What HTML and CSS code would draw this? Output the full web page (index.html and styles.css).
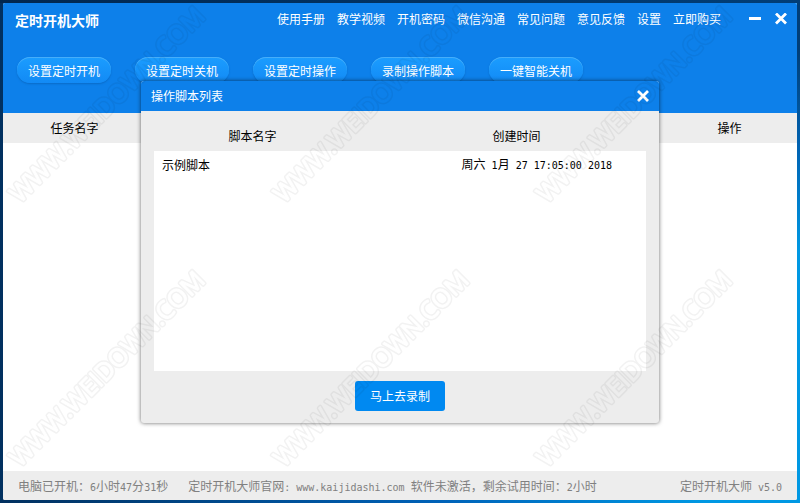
FILE: index.html
```html
<!DOCTYPE html>
<html lang="zh-CN">
<head>
    <meta charset="UTF-8">
    <meta name="viewport" content="width=device-width, initial-scale=1.0">
    <title>定时开机大师</title>
    <link rel="stylesheet" href="styles.css">
</head>
<body>
    <div class="window">
        <header class="header">
            <div class="topbar">
                <h1>定时开机大师</h1>
                <nav class="menu">
                    <a href="#">使用手册</a>
                    <a href="#">教学视频</a>
                    <a href="#">开机密码</a>
                    <a href="#">微信沟通</a>
                    <a href="#">常见问题</a>
                    <a href="#">意见反馈</a>
                    <a href="#">设置</a>
                    <a href="#">立即购买</a>
                </nav>
                <div class="controls">
                    <button type="button" class="icon-btn" aria-label="最小化">
                        <svg width="12" height="12" viewBox="0 0 12 12"><path d="M0 5.5H12" stroke="#fff" stroke-width="3"/></svg>
                    </button>
                    <button type="button" class="icon-btn" aria-label="关闭">
                        <svg width="12" height="12" viewBox="0 0 12 12"><path d="M1 .5L11 10.5M11 .5L1 10.5" stroke="#fff" stroke-width="2.8"/></svg>
                    </button>
                </div>
            </div>
            <div class="toolbar">
                <button type="button">设置定时开机</button>
                <button type="button">设置定时关机</button>
                <button type="button">设置定时操作</button>
                <button type="button">录制操作脚本</button>
                <button type="button">一键智能关机</button>
            </div>
        </header>
        <main class="tasks">
            <table class="task-table">
                <thead>
                    <tr><th class="name">任务名字</th><td></td><th class="action">操作</th></tr>
                </thead>
            </table>
        </main>
        <footer class="status">
            <span>电脑已开机：<span class="en">6</span>小时<span class="en">47</span>分<span class="en">31</span>秒</span>
            <span>定时开机大师官网<span class="en">: www.kaijidashi.com </span>软件未激活，剩余试用时间：<span class="en">2</span>小时</span>
            <span class="version">定时开机大师<span class="en"> v5.0</span></span>
        </footer>

        <section class="dialog" role="dialog" aria-labelledby="dialog-title">
            <div class="dialog-title">
                <h2 id="dialog-title">操作脚本列表</h2>
                <button type="button" class="icon-btn" aria-label="关闭">
                    <svg width="12" height="12" viewBox="0 0 12 12"><path d="M1 1L11 11M11 1L1 11" stroke="#fff" stroke-width="2.8"/></svg>
                </button>
            </div>
            <div class="script-list">
                <table>
                    <thead>
                        <tr><th class="script-name">脚本名字</th><th class="script-time">创建时间</th></tr>
                    </thead>
                    <tbody>
                        <tr><td>示例脚本</td><td class="time">周六<span class="en"> 1</span>月<span class="en"> 27 17:05:00 2018</span></td></tr>
                    </tbody>
                </table>
            </div>
            <div class="dialog-foot">
                <button type="button" class="record">马上去录制</button>
            </div>
        </section>
    </div>

    <svg class="watermark" aria-hidden="true">
        <defs>
            <mask id="outline" maskUnits="userSpaceOnUse" x="-10" y="-40" width="320" height="60">
                <rect x="-10" y="-40" width="320" height="60" fill="#fff"/>
                <text class="mark mark-hole">WWW.WEIDOWN.COM</text>
            </mask>
            <g id="mark"><g mask="url(#outline)"><text class="mark">WWW.WEIDOWN.COM</text></g></g>
        </defs>
        <use href="#mark" transform="translate(20 204) rotate(-45)"/>
        <use href="#mark" transform="translate(284 204) rotate(-45)"/>
        <use href="#mark" transform="translate(547 204) rotate(-45)"/>
        <use href="#mark" transform="translate(20 468) rotate(-45)"/>
        <use href="#mark" transform="translate(284 468) rotate(-45)"/>
        <use href="#mark" transform="translate(547 468) rotate(-45)"/>
    </svg>
</body>
</html>
```
FILE: styles.css
```css
*{
    box-sizing: border-box;
}
body{
    margin: 0;
    padding: 3px;
    min-height: 100vh;
    display: flex;
    background:
        linear-gradient(90deg, #01274f, #013e77) top / 100% 3px no-repeat,
        linear-gradient(#013e77 10%, #0064b4 30%, #0098e3 50%) right / 3px 100% no-repeat,
        linear-gradient(90deg, #01305f, #0062b8 55%, #0098e3 88%);
    font: 12px/16px "Noto Sans CJK SC", sans-serif;
    color: #000;
}
h1,h2{
    margin: 0;
}
button{
    font: inherit;
    color: #fff;
    border: 0;
    padding: 0;
    cursor: pointer;
}
table{
    width: 100%;
    border-collapse: collapse;
    table-layout: fixed;
}
th,td{
    padding: 0;
    font-weight: normal;
}
/* 数字和英文用半角宽度 */
.en{
    font-family: "DejaVu Sans Mono", monospace;
    font-size: 10px;
    white-space: pre;
}
.window{
    position: relative;
    flex: 1;
    display: flex;
    flex-direction: column;
    background: #fff;
    border-radius: 2px;
    overflow: hidden;
}
.header{
    height: 110px;
    background: #0d80ea;
    color: #fff;
}
.topbar{
    display: flex;
    align-items: center;
    height: 32px;
    padding: 0 10px 0 12px;
}
.topbar h1{
    font-size: 14px;
    line-height: 32px;
    padding-top: 2px;
}
.menu{
    display: flex;
    gap: 12px;
    margin-left: auto;
}
.menu a{
    color: #fff;
    text-decoration: none;
}
.controls{
    display: flex;
    gap: 14px;
    margin-left: 28px;
}
.icon-btn{
    display: flex;
    background: none;
}
.toolbar{
    display: flex;
    gap: 24px;
    padding: 22px 14px 0;
}
.toolbar button{
    width: 94px;
    height: 26px;
    border-radius: 13px;
    padding-top: 2px;
    background: linear-gradient(#1b9dff, #128af5);
    box-shadow: inset 0 1px #46aefa, 0 1px 2px #0a6ac6;
}
.tasks{
    flex: 1;
}
.task-table{
    height: 30px;
    background: #ededed;
}
.task-table .name{
    width: 18%;
}
.task-table .action{
    width: 17%;
}
.status{
    display: flex;
    align-items: center;
    gap: 20px;
    height: 29px;
    padding: 2px 15px 0;
    background: #ededed;
    color: #808080;
    white-space: nowrap;
}
.version{
    margin-left: auto;
}
.dialog{
    position: absolute;
    top: 78px;
    left: 138px;
    right: 138px;
    background: #ededed;
    border-radius: 3px;
    box-shadow: 0 0 4px rgba(0,0,0,.6);
}
.dialog-title{
    display: flex;
    align-items: center;
    justify-content: space-between;
    height: 30px;
    padding: 0 10px;
    background: #0d80ea;
    border-radius: 3px 3px 0 0;
    color: #fff;
}
.dialog-title h2{
    font-size: 12px;
    font-weight: normal;
}
.script-list{
    min-height: 260px;
    margin: 0 13px;
    background: #fff;
}
.script-list thead{
    background: #ededed;
}
.script-list th{
    height: 40px;
    padding-top: 10px;
}
.script-list .script-name{
    width: 40%;
}
.script-list .script-time{
    padding-left: 36px;
}
.script-list td{
    height: 28px;
    padding: 0 8px;
}
.script-list .time{
    padding-right: 34px;
    text-align: right;
}
.dialog-foot{
    display: flex;
    justify-content: center;
    padding: 10px 0 12px;
}
.record{
    width: 90px;
    height: 30px;
    border-radius: 3px;
    background: #0089f1;
}
.watermark{
    position: absolute;
    top: 0;
    left: 0;
    width: 100%;
    height: 100%;
    pointer-events: none;
}
.mark{
    font: 25px "Open Sans", sans-serif;
    fill: #000;
    stroke: #000;
    stroke-width: 4;
    stroke-linejoin: round;
    opacity: .05;
}
.mark-hole{
    stroke-width: 1;
    opacity: 1;
}
```
